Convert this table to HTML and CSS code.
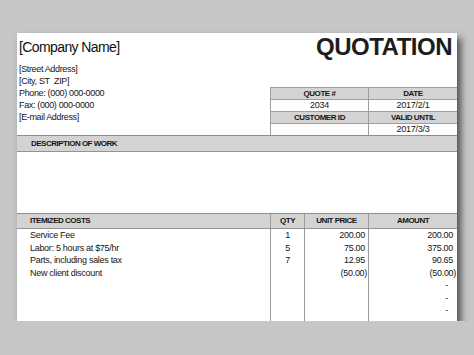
FILE: index.html
```html
<!DOCTYPE html>
<html>
<head>
<meta charset="utf-8">
<link rel="stylesheet" href="styles.css">
</head>
<body>
<div class="paper">
  <header class="top">
    <div class="company">
      <h1 class="company-name">[Company Name]</h1>
      <p class="address">[Street Address]</p>
      <p class="address">[City, ST&nbsp; ZIP]</p>
      <p class="address">Phone: (000) 000-0000</p>
      <p class="address">Fax: (000) 000-0000</p>
      <p class="address">[E-mail Address]</p>
    </div>
    <div class="right">
      <h2 class="title">QUOTATION</h2>
      <div class="meta">
        <div class="h">QUOTE #</div>
        <div class="h">DATE</div>
        <div>2034</div>
        <div>2017/2/1</div>
        <div class="h">CUSTOMER ID</div>
        <div class="h">VALID UNTIL</div>
        <div class="last"></div>
        <div class="last">2017/3/3</div>
      </div>
    </div>
  </header>

  <section class="desc">
    <div class="band">DESCRIPTION OF WORK</div>
    <div class="desc-body"></div>
  </section>

  <section class="items">
    <div class="row items-head">
      <span class="c-desc">ITEMIZED COSTS</span>
      <span class="c-center">QTY</span>
      <span class="c-center">UNIT PRICE</span>
      <span class="c-center">AMOUNT</span>
    </div>
    <div class="row line">
      <span class="c-desc">Service Fee</span>
      <span class="c-center">1</span>
      <span class="c-price">200.00</span>
      <span class="c-amount">200.00</span>
    </div>
    <div class="row line">
      <span class="c-desc">Labor: 5 hours at $75/hr</span>
      <span class="c-center">5</span>
      <span class="c-price">75.00</span>
      <span class="c-amount">375.00</span>
    </div>
    <div class="row line">
      <span class="c-desc">Parts, including sales tax</span>
      <span class="c-center">7</span>
      <span class="c-price">12.95</span>
      <span class="c-amount">90.65</span>
    </div>
    <div class="row line">
      <span class="c-desc">New client discount</span>
      <span class="c-center"></span>
      <span class="c-price neg">(50.00)</span>
      <span class="c-amount neg">(50.00)</span>
    </div>
    <div class="row line">
      <span class="c-desc"></span>
      <span class="c-center"></span>
      <span class="c-price"></span>
      <span class="c-amount dash">-</span>
    </div>
    <div class="row line">
      <span class="c-desc"></span>
      <span class="c-center"></span>
      <span class="c-price"></span>
      <span class="c-amount dash">-</span>
    </div>
    <div class="row line">
      <span class="c-desc"></span>
      <span class="c-center"></span>
      <span class="c-price"></span>
      <span class="c-amount dash">-</span>
    </div>
    <div class="row filler">
      <span></span><span></span><span></span><span></span>
    </div>
  </section>
</div>
</body>
</html>
```

FILE: styles.css
```css
* {
  box-sizing: border-box;
  margin: 0;
  padding: 0;
}

body {
  background: #c6c6c6;
  font-family: "Liberation Sans", Arial, sans-serif;
  color: #151515;
}

.paper {
  margin: 33px 0 0 17px;
  width: 440px;
  height: 288px;
  background: #fff;
  box-shadow: 4px 5px 7px rgba(0, 0, 0, 0.6);
  display: flex;
  flex-direction: column;
}

.top {
  height: 102px;
  display: flex;
  justify-content: space-between;
}

.company {
  padding: 6px 0 0 2px;
}

.company-name {
  font-size: 14px;
  line-height: 16px;
  font-weight: normal;
  letter-spacing: -0.6px;
  margin-bottom: 8px;
  color: #111;
}

.address {
  font-size: 9px;
  line-height: 12px;
  letter-spacing: -0.35px;
}

.right {
  display: flex;
  flex-direction: column;
  justify-content: space-between;
  align-items: flex-end;
  padding-top: 2px;
}

.title {
  font-size: 24px;
  line-height: 24px;
  font-weight: bold;
  letter-spacing: -0.5px;
  padding-right: 5px;
  color: #1d1d1d;
}

.meta {
  display: grid;
  grid-template-columns: 98px 88px;
  width: 187px;
  border-top: 1px solid #9e9e9e;
  border-left: 1px solid #9e9e9e;
}

.meta > div {
  height: 12px;
  line-height: 11px;
  border-bottom: 1px solid #9e9e9e;
  text-align: center;
  font-size: 9px;
  letter-spacing: -0.25px;
}

.meta > div:nth-child(odd) {
  border-right: 1px solid #9e9e9e;
}

.meta > div.last {
  height: 11px;
  border-bottom: 0;
}

.meta > div.h {
  background: #d4d4d4;
  font-weight: bold;
  font-size: 8px;
  letter-spacing: -0.45px;
}

.band {
  height: 17px;
  border-top: 1px solid #8e8e8e;
  border-bottom: 1px solid #949494;
  background: #d3d3d3;
  font-size: 8px;
  font-weight: bold;
  letter-spacing: -0.5px;
  line-height: 15px;
  padding-left: 14px;
}

.desc-body {
  height: 61px;
}

.items {
  flex: 1;
  display: flex;
  flex-direction: column;
}

.row {
  display: grid;
  grid-template-columns: 254px 34px 64px 88px;
}

.row > span {
  border-right: 1px solid #9a9a9a;
  white-space: nowrap;
}

.row > span:last-child {
  border-right: 0;
}

.items-head {
  height: 16px;
  border-top: 1px solid #8e8e8e;
  border-bottom: 1px solid #949494;
  background: #d3d3d3;
  font-weight: bold;
  font-size: 8px;
  line-height: 14px;
  letter-spacing: -0.5px;
}

.line {
  height: 12.5px;
  line-height: 12.5px;
  font-size: 9px;
  letter-spacing: -0.3px;
}

.filler {
  flex: 1;
}

.c-desc {
  padding-left: 13px;
}

.c-center {
  text-align: center;
}

.c-price {
  text-align: right;
  padding-right: 3px;
}

.c-amount {
  text-align: right;
  padding-right: 4px;
}

.c-price.neg {
  padding-right: 1px;
}

.c-amount.neg {
  padding-right: 1px;
}

.c-amount.dash {
  padding-right: 9px;
}
```
